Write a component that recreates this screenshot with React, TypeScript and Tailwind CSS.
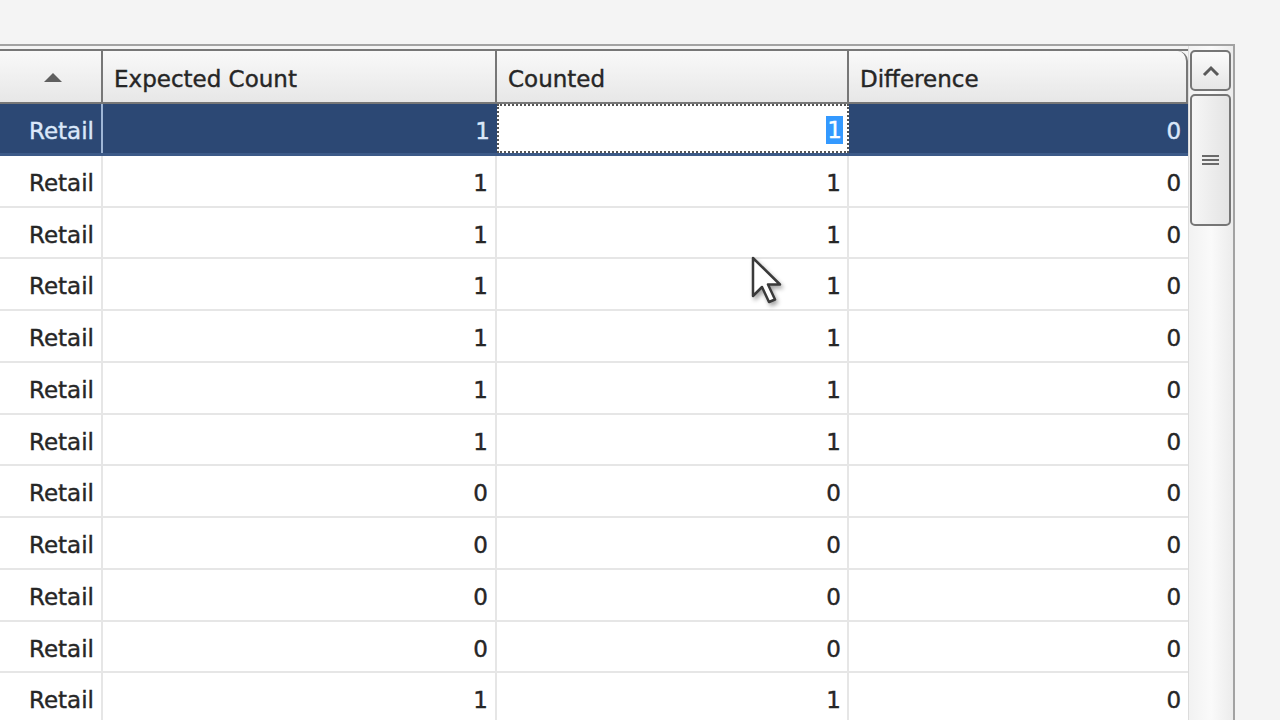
import React from 'react';

type Row = { type: string; expected: number; counted: number; diff: number };

const rows: Row[] = [
  { type: 'Retail', expected: 1, counted: 1, diff: 0 },
  { type: 'Retail', expected: 1, counted: 1, diff: 0 },
  { type: 'Retail', expected: 1, counted: 1, diff: 0 },
  { type: 'Retail', expected: 1, counted: 1, diff: 0 },
  { type: 'Retail', expected: 1, counted: 1, diff: 0 },
  { type: 'Retail', expected: 1, counted: 1, diff: 0 },
  { type: 'Retail', expected: 1, counted: 1, diff: 0 },
  { type: 'Retail', expected: 0, counted: 0, diff: 0 },
  { type: 'Retail', expected: 0, counted: 0, diff: 0 },
  { type: 'Retail', expected: 0, counted: 0, diff: 0 },
  { type: 'Retail', expected: 0, counted: 0, diff: 0 },
  { type: 'Retail', expected: 1, counted: 1, diff: 0 },
];

function Cursor() {
  return (
    <svg
      className="absolute left-[751px] top-[256px] drop-shadow-[2px_3px_2px_rgba(0,0,0,0.35)]"
      width="34"
      height="50"
      viewBox="0 0 34 50"
    >
      <path
        d="M2 2 L2 40 L11 31 L18 46 L24 43.5 L17 28.5 L29 28.5 Z"
        fill="#ffffff"
        stroke="#3a3a3a"
        strokeWidth="2.5"
        strokeLinejoin="round"
      />
    </svg>
  );
}

function Scrollbar() {
  return (
    <div className="w-[45px] flex flex-col items-start pl-[1px] pt-[4px] bg-gradient-to-r from-[#f2f2f2] via-[#fafafa] to-[#ececec] border-l border-[#dcdcdc]">
      <div className="w-[41px] h-[41px] rounded-[5px] border-2 border-[#767676] bg-gradient-to-b from-[#fbfbfb] to-[#e6e6e6] flex items-center justify-center">
        <svg width="20" height="12" viewBox="0 0 20 12">
          <path d="M3 10 L10 3 L17 10" fill="none" stroke="#5a5a5a" strokeWidth="3" />
        </svg>
      </div>
      <div className="mt-[3px] w-[41px] h-[132px] rounded-[5px] border-2 border-[#767676] bg-gradient-to-r from-[#f6f6f6] to-[#e4e4e4] flex flex-col items-center justify-center gap-[2px]">
        <div className="w-[17px] h-[2px] bg-[#6a6a6a]" />
        <div className="w-[17px] h-[2px] bg-[#6a6a6a]" />
        <div className="w-[17px] h-[2px] bg-[#6a6a6a]" />
      </div>
    </div>
  );
}

export default function App() {
  const font = { fontFamily: '"DejaVu Sans", Verdana, sans-serif' };
  return (
    <div className="relative w-[1280px] h-[720px] overflow-hidden bg-[#f4f4f4]" style={font}>
      <div className="pt-[44px]">
        <div className="w-[1235px] h-[700px] flex border-t-2 border-r-2 border-[#a2a2a2] bg-white">
          <div className="w-[1189px] flex flex-col pt-[3px] bg-[#f4f4f4]">
            {/* header */}
            <div className="flex h-[55px] border-t-2 border-b-2 border-[#777777] text-[23px] text-[#262626] [-webkit-text-stroke:0.4px_#262626]">
              <div className="w-[103px] flex items-center justify-center pl-[4px] border-r-2 border-[#777777] bg-gradient-to-b from-[#f9f9f9] to-[#e7e7e7]">
                <svg width="20" height="12" viewBox="0 0 20 12">
                  <path d="M1 11 L10 2 L19 11 Z" fill="#5f5f5f" />
                </svg>
              </div>
              <div className="w-[394px] flex items-center pl-[11px] pt-[5px] border-r-2 border-[#777777] bg-gradient-to-b from-[#f9f9f9] to-[#e7e7e7]">
                Expected Count
              </div>
              <div className="w-[352px] flex items-center pl-[11px] pt-[5px] border-r-2 border-[#777777] bg-gradient-to-b from-[#f9f9f9] to-[#e7e7e7]">
                Counted
              </div>
              <div className="flex-1 flex items-center pl-[11px] pt-[5px] border-r-2 border-[#777777] rounded-tr-[10px] bg-gradient-to-b from-[#f9f9f9] to-[#e7e7e7]">
                Difference
              </div>
            </div>

            {/* body */}
            <div className="flex-1 bg-white text-[23px] text-[#262626] [-webkit-text-stroke:0.4px_#262626]">
              {rows.map((r, i) => {
                const sel = i === 0;
                return (
                  <div
                    key={i}
                    className={
                      sel
                        ? 'flex h-[51.75px] bg-[#2c4874] text-[#dbe8fa] [-webkit-text-stroke:0.4px_#dbe8fa] border-b-[3px] border-[#3c5a88]'
                        : 'flex h-[51.75px] border-b-2 border-[#e6e6e6]'
                    }
                  >
                    <div
                      className={
                        sel
                          ? 'w-[103px] flex items-center justify-end pr-[7px] pt-[5px] border-r-2 border-[#9fb6d6]'
                          : 'w-[103px] flex items-center justify-end pr-[7px] pt-[5px] border-r-2 border-[#e6e6e6]'
                      }
                    >
                      {r.type}
                    </div>
                    <div
                      className={
                        sel
                          ? 'w-[394px] flex items-center justify-end pr-[7px] pt-[5px]'
                          : 'w-[394px] flex items-center justify-end pr-[7px] pt-[5px] border-r-2 border-[#e6e6e6]'
                      }
                    >
                      {r.expected}
                    </div>
                    {sel ? (
                      <div className="w-[352px] flex items-center justify-end pr-[4px] pt-[3px] bg-white border-2 border-dotted border-[#555555]">
                        <span className="bg-[#3399ff] text-white [-webkit-text-stroke:0.3px_#ffffff] px-[1px] leading-[28px]">{r.counted}</span>
                      </div>
                    ) : (
                      <div className="w-[352px] flex items-center justify-end pr-[6px] pt-[5px] border-r-2 border-[#e6e6e6]">
                        {r.counted}
                      </div>
                    )}
                    <div className="flex-1 flex items-center justify-end pr-[7px] pt-[5px]">
                      {r.diff}
                    </div>
                  </div>
                );
              })}
            </div>
          </div>
          <Scrollbar />
        </div>
      </div>
      <Cursor />
    </div>
  );
}
